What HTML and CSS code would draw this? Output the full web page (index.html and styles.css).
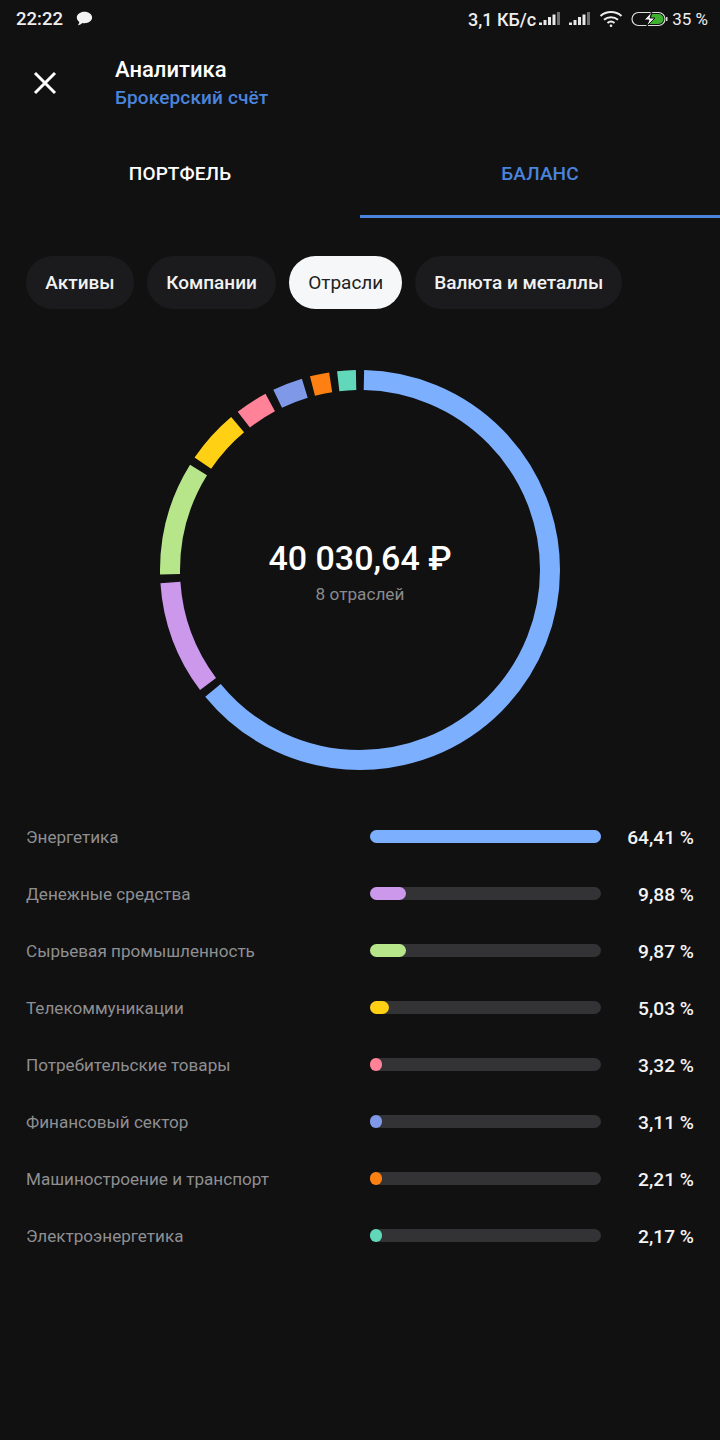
FILE: index.html
```html
<!DOCTYPE html>
<html lang="ru">
<head>
    <meta charset="UTF-8">
    <meta name="viewport" content="width=device-width, initial-scale=1.0">
    <title>Аналитика</title>
    <link rel="stylesheet" href="styles.css">
</head>
<body>
    <div class="status-bar">
        <div class="status-left">
            <span class="time">22:22</span>
            <svg class="chat-icon" width="18" height="16" viewBox="0 0 18 16"><path d="M9.500 .8c4.200 0 7.600 2.500 7.600 5.700s-3.400 5.700-7.600 5.700c-.8 0-1.500-.1-2.200-.3-1 1.200-2.700 2.200-4.600 2.400.9-1 1.500-2.100 1.600-3.400C2.800 9.900 1.800 8.300 1.800 6.500 1.800 3.300 5.300 .8 9.500 .8z" fill="#f2f2f2"/></svg>
        </div>
        <div class="status-right">
            <span class="net-speed">3,1 КБ/с</span>
            <svg class="signal" width="23" height="16" viewBox="0 0 23 16">
                <rect x="1" y="11.500" width="3" height="2.500" fill="#e8e8e8"/>
                <rect x="5.500" y="9" width="3" height="5" fill="#e8e8e8"/>
                <rect x="10" y="6" width="3" height="8" fill="#e8e8e8"/>
                <rect x="14.500" y="3.500" width="3" height="10.500" fill="#e8e8e8"/>
                <rect x="19" y="1" width="3" height="13" fill="#6f6f6f"/>
            </svg>
            <svg class="signal" width="23" height="16" viewBox="0 0 23 16">
                <rect x="1" y="11.500" width="3" height="2.500" fill="#e8e8e8"/>
                <rect x="5.500" y="9" width="3" height="5" fill="#e8e8e8"/>
                <rect x="10" y="6" width="3" height="8" fill="#e8e8e8"/>
                <rect x="14.500" y="3.500" width="3" height="10.500" fill="#e8e8e8"/>
                <rect x="19" y="1" width="3" height="13" fill="#6f6f6f"/>
            </svg>
            <svg class="wifi" width="24" height="18" viewBox="0 0 24 18" fill="none" stroke="#eee" stroke-width="2">
                <path d="M1.500 6C7.500 .8 16.500 .8 22.500 6"/>
                <path d="M5 9.800c4-3.500 10-3.500 14 0"/>
                <path d="M8.500 13c2-1.700 5-1.700 7 0"/>
                <circle cx="12" cy="15.800" r="1.300" fill="#eee" stroke="none"/>
            </svg>
            <svg class="battery" width="37" height="16" viewBox="0 0 37 16">
                <rect x="1" y="1.500" width="33" height="13" rx="6.500" fill="none" stroke="#ddd" stroke-width="1.200"/>
                <path d="M21 3h6.500a5 5 0 0 1 0 10H18z" fill="#3db02f"/>
                <path d="M21 .5 13 9h5l-2.500 6.500L24 7h-5z" fill="#f2f2f2" stroke="#111" stroke-width="1"/>
                <rect x="35" y="6" width="1.500" height="4" fill="#ddd"/>
            </svg>
            <span class="battery-level">35 %</span>
        </div>
    </div>

    <header class="header">
        <svg class="close-icon" width="24" height="24" viewBox="0 0 24 24" stroke="#fff" stroke-width="3"><path d="M2 2l20 20M22 2L2 22"/></svg>
        <div class="header-text">
            <div class="title">Аналитика</div>
            <div class="subtitle">Брокерский счёт</div>
        </div>
    </header>

    <nav class="tabs">
        <div class="tab">ПОРТФЕЛЬ</div>
        <div class="tab tab-active">БАЛАНС</div>
    </nav>

    <div class="chips">
        <div class="chip">Активы</div>
        <div class="chip">Компании</div>
        <div class="chip chip-active">Отрасли</div>
        <div class="chip chip-last">Валюта и металлы</div>
    </div>

    <div class="donut">
        <svg width="400" height="400" viewBox="0 0 400 400" fill="none" stroke-width="20">
            <g transform="rotate(-90 200 200)">
                <circle cx="200" cy="200" r="190" pathLength="360" stroke="#7cb0ff" stroke-dasharray="229.500 360" stroke-dashoffset="-1.200"/>
                <circle cx="200" cy="200" r="190" pathLength="360" stroke="#cb98ec" stroke-dasharray="33.100 360" stroke-dashoffset="-233.100"/>
                <circle cx="200" cy="200" r="190" pathLength="360" stroke="#b7e68a" stroke-dasharray="33.100 360" stroke-dashoffset="-268.700"/>
                <circle cx="200" cy="200" r="190" pathLength="360" stroke="#ffd014" stroke-dasharray="15.700 360" stroke-dashoffset="-304.200"/>
                <circle cx="200" cy="200" r="190" pathLength="360" stroke="#ff8298" stroke-dasharray="9.500 360" stroke-dashoffset="-322.300"/>
                <circle cx="200" cy="200" r="190" pathLength="360" stroke="#7f98e8" stroke-dasharray="8.800 360" stroke-dashoffset="-334.300"/>
                <circle cx="200" cy="200" r="190" pathLength="360" stroke="#ff8012" stroke-dasharray="5.600 360" stroke-dashoffset="-345.500"/>
                <circle cx="200" cy="200" r="190" pathLength="360" stroke="#62d8bb" stroke-dasharray="5.400 360" stroke-dashoffset="-353.400"/>
            </g>
        </svg>
        <div class="donut-center">
            <div class="total">40 030,64 ₽</div>
            <div class="total-note">8 отраслей</div>
        </div>
    </div>

    <div class="sectors">
        <div class="sector">
            <span class="sector-name">Энергетика</span>
            <div class="bar"><div class="bar-fill" style="width: 100%; background: #7cb0ff"></div></div>
            <span class="sector-value">64,41 %</span>
        </div>
        <div class="sector">
            <span class="sector-name">Денежные средства</span>
            <div class="bar"><div class="bar-fill" style="width: 15.500%; background: #cb98ec"></div></div>
            <span class="sector-value">9,88 %</span>
        </div>
        <div class="sector">
            <span class="sector-name">Сырьевая промышленность</span>
            <div class="bar"><div class="bar-fill" style="width: 15.500%; background: #b7e68a"></div></div>
            <span class="sector-value">9,87 %</span>
        </div>
        <div class="sector">
            <span class="sector-name">Телекоммуникации</span>
            <div class="bar"><div class="bar-fill" style="width: 8.200%; background: #ffd014"></div></div>
            <span class="sector-value">5,03 %</span>
        </div>
        <div class="sector">
            <span class="sector-name">Потребительские товары</span>
            <div class="bar"><div class="bar-fill" style="width: 5.200%; background: #ff8298"></div></div>
            <span class="sector-value">3,32 %</span>
        </div>
        <div class="sector">
            <span class="sector-name">Финансовый сектор</span>
            <div class="bar"><div class="bar-fill" style="width: 5.200%; background: #7f98e8"></div></div>
            <span class="sector-value">3,11 %</span>
        </div>
        <div class="sector">
            <span class="sector-name">Машиностроение и транспорт</span>
            <div class="bar"><div class="bar-fill" style="width: 5.200%; background: #ff8012"></div></div>
            <span class="sector-value">2,21 %</span>
        </div>
        <div class="sector">
            <span class="sector-name">Электроэнергетика</span>
            <div class="bar"><div class="bar-fill" style="width: 5.200%; background: #62d8bb"></div></div>
            <span class="sector-value">2,17 %</span>
        </div>
    </div>
</body>
</html>
```

FILE: styles.css
```css
* {
    margin: 0;
    padding: 0;
    box-sizing: border-box;
}

body {
    width: 720px;
    min-height: 1440px;
    background: #111112;
    color: #fff;
    font-family: Roboto, "Liberation Sans", sans-serif;
}

.status-bar {
    height: 38px;
    padding: 0 12px 0 16px;
    display: flex;
    justify-content: space-between;
    align-items: center;
    color: #eee;
    font-size: 18px;
    font-weight: 500;
}

.status-left,
.status-right {
    display: flex;
    align-items: center;
}

.time {
    font-size: 18.500px;
}

.chat-icon {
    margin-left: 12px;
}

.signal {
    margin-left: 2px;
}

.signal + .signal {
    margin-left: 7px;
}

.wifi {
    margin-left: 8px;
}

.battery {
    margin-left: 8px;
}

.battery-level {
    margin-left: 4px;
    font-weight: 400;
    font-size: 17px;
}

.header {
    height: 90px;
    padding: 0 0 0 33px;
    display: flex;
    align-items: center;
}

.close-icon {
    margin-right: 58px;
}

.title {
    font-size: 22px;
    line-height: 28px;
    font-weight: 500;
    margin-top: 1px;
}

.subtitle {
    font-size: 19px;
    line-height: 28px;
    font-weight: 500;
    letter-spacing: 0.15px;
    color: #4a84dc;
}

.tabs {
    height: 90px;
    display: grid;
    grid-template-columns: 1fr 1fr;
}

.tab {
    display: flex;
    align-items: center;
    justify-content: center;
    font-size: 19px;
    font-weight: 500;
    letter-spacing: 0.1px;
}

.tab-active {
    padding-top: 3px;
    color: #4a84dc;
    border-bottom: 3px solid #4a84dc;
}

.chips {
    margin-top: 38px;
    padding-left: 26px;
    display: flex;
    gap: 13px;
}

.chip {
    height: 53px;
    padding: 0 19.300px;
    display: flex;
    align-items: center;
    border-radius: 27px;
    background: #1b1b1d;
    font-size: 19px;
    font-weight: 500;
    color: #f2f2f2;
}

.chip-active {
    padding: 0 19px;
    background: #f6f7f8;
    color: #222;
    font-weight: 400;
}

.chip-last {
    padding: 0 19px;
    letter-spacing: -0.03px;
}

.donut {
    position: relative;
    width: 400px;
    height: 400px;
    margin: 61px auto 0;
}

.donut svg {
    display: block;
}

.donut-center {
    position: absolute;
    inset: 0;
    display: flex;
    flex-direction: column;
    align-items: center;
    justify-content: center;
}

.total {
    font-size: 34px;
    line-height: 40px;
    font-weight: 500;
    margin-top: 2px;
}

.total-note {
    margin-top: 6px;
    font-size: 17.200px;
    line-height: 20px;
    color: #8a8a8c;
}

.sectors {
    margin-top: 50px;
    padding: 0 26px;
    display: flex;
    flex-direction: column;
    gap: 23px;
}

.sector {
    height: 34px;
    display: flex;
    align-items: center;
}

.sector-name {
    width: 344px;
    font-size: 17.100px;
    color: #8f8f91;
}

.bar {
    width: 231px;
    height: 13px;
    margin-bottom: 2px;
    border-radius: 7px;
    background: #333335;
}

.bar-fill {
    height: 100%;
    min-width: 12px;
    border-radius: 7px;
}

.sector-value {
    flex: 1;
    text-align: right;
    font-size: 19.200px;
    font-weight: 500;
    color: #f4f4f4;
}
```
